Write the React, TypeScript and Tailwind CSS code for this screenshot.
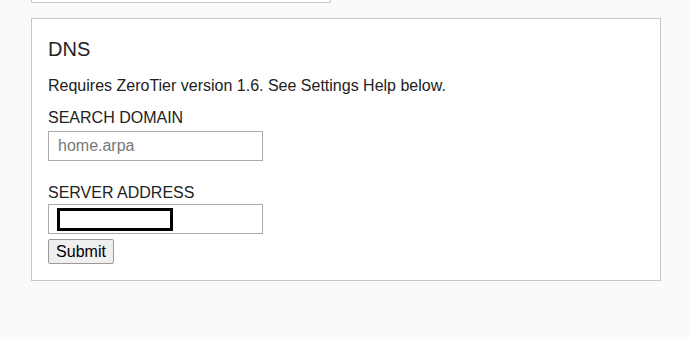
export default function App() {
  return (
    <div className="h-[339px] w-[690px] overflow-hidden bg-[#fafafa] font-['Liberation_Sans',Arial,sans-serif] text-[#222]">
      <div className="ml-[31px] h-[3px] w-[300px] border-x border-b border-[#c8c8c8] bg-white" />
      <div className="ml-[31px] mt-[15px] flex h-[263px] w-[630px] flex-col items-start border border-[#c8c8c8] bg-white pl-[16px] pt-[18px]">
        <h2 className="text-[20px] leading-[24px]">DNS</h2>
        <p className="mt-[16px] text-[16px] leading-[18px]">
          Requires ZeroTier version 1.6. See Settings Help below.
        </p>
        <label className="mt-[14px] text-[16px] leading-[18px]">SEARCH DOMAIN</label>
        <input
          className="mt-[4px] h-[30px] w-[215px] border border-[#aaa] px-[9px] text-[16px] placeholder:text-[#777]"
          placeholder="home.arpa"
        />
        <label className="mt-[23px] text-[16px] leading-[18px]">SERVER ADDRESS</label>
        <div className="relative mt-[2px]">
          <input className="h-[30px] w-[215px] border border-[#aaa] px-[9px] text-[16px]" />
          <div className="absolute left-[9px] top-[4px] h-[23px] w-[116px] border-[3px] border-black" />
        </div>
        <button className="mt-[5px] h-[25px] w-[66px] rounded-[2px] border border-[#999] bg-[#efefef] text-[16px] leading-[18px] text-black">
          Submit
        </button>
      </div>
    </div>
  );
}
